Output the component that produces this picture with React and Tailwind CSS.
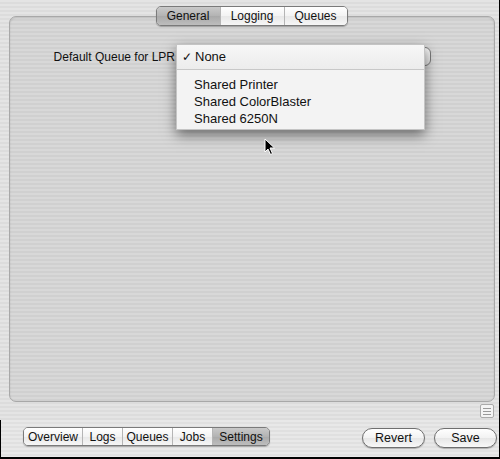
import React from "react";

const stripes =
  "bg-[repeating-linear-gradient(180deg,#e4e4e4_0px,#e4e4e4_2px,#dcdcdc_2px,#dcdcdc_4px)]";

function Seg({ items, selected, widths, h = "h-[19px]", text = "text-[11.5px]" }) {
  return (
    <div className={`flex ${h} rounded-[5px] border border-[#7a7a7a] overflow-hidden shadow-[0_1px_1px_rgba(0,0,0,0.25)]`}>
      {items.map((it, i) => (
        <div
          key={it}
          style={{ width: widths[i] }}
          className={`flex items-center justify-center ${text} text-[#111] ${
            i > 0 ? "border-l border-[#b5b5b5]" : ""
          } ${
            it === selected
              ? "bg-[linear-gradient(180deg,#c9c9c9_0%,#b3b3b3_50%,#a9a9a9_51%,#bdbdbd_100%)]"
              : "bg-[linear-gradient(180deg,#ffffff_0%,#f3f3f3_50%,#e8e8e8_51%,#f6f6f6_100%)]"
          }`}
        >
          {it}
        </div>
      ))}
    </div>
  );
}

function PillButton({ label, w }) {
  return (
    <div
      style={{ width: w }}
      className="h-[20px] rounded-full border border-[#6f6f6f] bg-[linear-gradient(180deg,#ffffff_0%,#f2f2f2_50%,#e6e6e6_51%,#f8f8f8_100%)] flex items-center justify-center text-[12.5px] text-[#111] shadow-[0_1px_1px_rgba(0,0,0,0.25)]"
    >
      {label}
    </div>
  );
}

export default function App() {
  return (
    <div
      className={`relative w-[500px] h-[459px] overflow-hidden ${stripes} font-['Liberation_Sans',Arial,sans-serif]`}
    >
      {/* top area */}
      <div className="h-[420px] flex flex-col pt-[6px] px-[9px] pr-[4px] border-r border-black">
        <div className="relative z-10 flex justify-center h-[20px] pr-[1px]">
          <Seg
            items={["General", "Logging", "Queues"]}
            selected="General"
            widths={[63, 64, 63]}
            h="h-[20px]"
            text="text-[12px]"
          />
        </div>
        <div className="-mt-[10px] h-[386px] rounded-[7px] border border-[#a8a8a8] bg-[repeating-linear-gradient(180deg,#d8d8d8_0px,#d8d8d8_2px,#d0d0d0_2px,#d0d0d0_4px)] shadow-[inset_0_1px_2px_rgba(0,0,0,0.12)]">
          <div className="flex items-center mt-[30px] h-[19px]">
            <div className="w-[166px] text-right pr-[1px] text-[12px] text-[#111] whitespace-nowrap">
              Default Queue for LPR
            </div>
            <div className="ml-[1px] w-[254px] h-[19px] rounded-[6px] border border-[#7a7a7a] bg-[linear-gradient(180deg,#fafafa,#e2e2e2)]" />
          </div>
        </div>
        <div className="flex justify-end pr-[1px] pt-[2px]">
          <div className="w-[14px] h-[14px] border border-[#aaa] rounded-[2px] bg-[#f4f4f4] flex flex-col gap-[2px] p-[2px] pt-[3px]">
            <div className="h-[1px] bg-[#999]" />
            <div className="h-[1px] bg-[#999]" />
            <div className="h-[1px] bg-[#999]" />
          </div>
        </div>
      </div>

      {/* bottom bar */}
      <div className="h-[39px] border-l border-r border-b-2 border-black bg-[repeating-linear-gradient(180deg,#e8e8e8_0px,#e8e8e8_2px,#e0e0e0_2px,#e0e0e0_4px)] flex items-start pt-[7px] pl-[22px] pr-[2px]">
        <Seg
          items={["Overview", "Logs", "Queues", "Jobs", "Settings"]}
          selected="Settings"
          widths={[58, 40, 50, 40, 57]}
          text="text-[12px]"
        />
        <div className="ml-auto flex gap-[9px] mt-[1px]">
          <PillButton label="Revert" w={63} />
          <PillButton label="Save" w={63} />
        </div>
      </div>

      {/* popup menu */}
      <div className="absolute left-[176px] top-[44px] w-[249px] h-[86px] bg-[#f3f3f3] border border-[#c4c4c4] shadow-[0_5px_12px_rgba(0,0,0,0.5)] text-[13px] text-[#111]">
        <div className="h-[24px] flex items-center pl-[5px] bg-[linear-gradient(180deg,#f7f7f7,#ececec)]">
          <span className="w-[13px] text-[12px]">✓</span>
          <span>None</span>
        </div>
        <div className="h-[1px] bg-[#c8c8c8] mx-0" />
        <div className="pt-[6px] pl-[17px] flex flex-col leading-[17px]">
          <span>Shared Printer</span>
          <span>Shared ColorBlaster</span>
          <span>Shared 6250N</span>
        </div>
      </div>

      {/* cursor */}
      <svg className="absolute left-[264px] top-[138px]" width="12" height="18" viewBox="0 0 12 18">
        <path d="M1 1 L1 14 L4 11 L6.5 16.5 L8.5 15.5 L6 10 L10.5 10 Z" fill="#000" stroke="#fff" strokeWidth="1" />
      </svg>
    </div>
  );
}
